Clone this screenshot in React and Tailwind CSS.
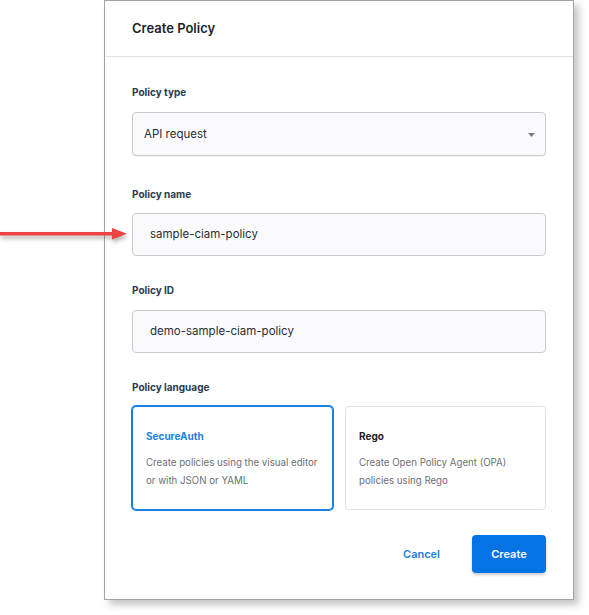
import React, { useState } from "react";

const font = { fontFamily: "Inter, 'Liberation Sans', sans-serif" };

const Label = ({ children, className = "" }) => (
  <div className={`h-[14px] text-[10px] font-bold leading-[14px] text-[#2b3a4f] ${className}`}>{children}</div>
);

const ArrowPointer = () => (
  <svg className="absolute left-0 top-[224px]" width="132" height="22" viewBox="0 0 132 22" style={{ filter: "drop-shadow(1px 3px 2px rgba(0,0,0,0.3))" }}>
    <rect x="0" y="8" width="116" height="3.5" fill="#ee4444" />
    <polygon points="112,4 127,9.75 112,15.5" fill="#ee4444" />
  </svg>
);

const LanguageCard = ({ title, lines, selected, onClick }) => (
  <div
    role="button"
    onClick={onClick}
    className={`h-[104px] cursor-pointer rounded-[4px] border bg-white pl-[13px] pt-[22px] ${
      selected ? "border-[#1a7fe0] ring-1 ring-[#1a7fe0]" : "border-[#dfe1e5]"
    }`}
  >
    <div className={`h-[14px] text-[10px] font-bold leading-[14px] ${selected ? "text-[#1a7fe0]" : "text-[#1f2328]"}`}>{title}</div>
    <div className="mt-[11px] text-[9.7px] leading-[18px] text-[#6b7078]">
      {lines.map((l) => (
        <div key={l}>{l}</div>
      ))}
    </div>
  </div>
);

export default function App() {
  const [language, setLanguage] = useState("secureauth");

  return (
    <div className="relative h-[615px] w-[589px] overflow-hidden bg-white" style={font}>
      <div className="ml-[104px] h-[600px] w-[470px] border border-[#a3a3a3] bg-white shadow-[5px_5px_7px_rgba(0,0,0,0.22)]">
        <div className="flex h-[56px] items-center border-b border-[#e2e4e8] pl-[27px]">
          <h1 className="text-[13px] font-semibold text-[#1f2328]">Create Policy</h1>
        </div>

        <div className="px-[27px]">
          <Label className="mt-[28px]">Policy type</Label>
          <div className="mt-[13px] flex h-[44px] items-center justify-between rounded-[4px] border border-[#c8cbd0] bg-[#fafafc] pl-[11px] pr-[10px] pt-px shadow-[0_1px_1px_rgba(0,0,0,0.06)]">
            <span className="text-[11.5px] text-[#2a2d33]">API request</span>
            <svg width="7" height="4" viewBox="0 0 7 4">
              <polygon points="0,0 7,0 3.5,4" fill="#7a7d82" />
            </svg>
          </div>

          <Label className="mt-[31px]">Policy name</Label>
          <div className="mt-[12px] flex h-[43px] items-center rounded-[4px] border border-[#c8cbd0] bg-[#fafafc] pl-[17px] pt-px">
            <span className="text-[11.5px] text-[#2a2d33]">sample-ciam-policy</span>
          </div>

          <Label className="mt-[27px]">Policy ID</Label>
          <div className="mt-[13px] flex h-[43px] items-center rounded-[4px] border border-[#c8cbd0] bg-[#fafafc] pl-[17px] pt-px">
            <span className="text-[11.5px] text-[#2a2d33]">demo-sample-ciam-policy</span>
          </div>

          <Label className="mt-[27px]">Policy language</Label>
          <div className="mt-[12px] grid grid-cols-2 gap-[12px]">
            <LanguageCard
              title="SecureAuth"
              lines={["Create policies using the visual editor", "or with JSON or YAML"]}
              selected={language === "secureauth"}
              onClick={() => setLanguage("secureauth")}
            />
            <LanguageCard
              title="Rego"
              lines={["Create Open Policy Agent (OPA)", "policies using Rego"]}
              selected={language === "rego"}
              onClick={() => setLanguage("rego")}
            />
          </div>

          <div className="mt-[25px] flex items-center justify-end">
            <button type="button" className="mr-[32px] text-[11px] font-semibold text-[#1a7fe0]">
              Cancel
            </button>
            <button
              type="button"
              className="h-[38px] w-[74px] rounded-[4px] bg-[#0573e3] text-[11px] font-semibold text-white shadow-[0_2px_3px_rgba(0,0,0,0.2)]"
            >
              Create
            </button>
          </div>
        </div>
      </div>
      <ArrowPointer />
    </div>
  );
}
